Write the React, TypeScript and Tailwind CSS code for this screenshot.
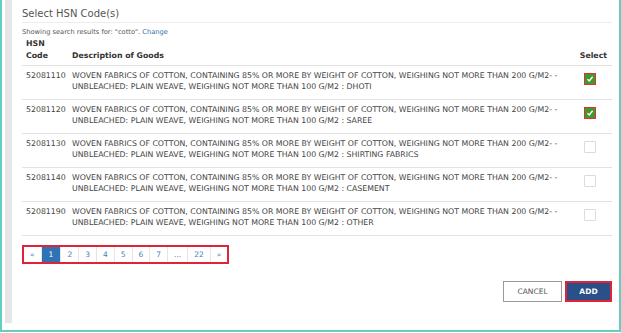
import React from "react";

const rows = [
  { code: "52081110", tail: "DHOTI", checked: true },
  { code: "52081120", tail: "SAREE", checked: true },
  { code: "52081130", tail: "SHIRTING FABRICS", checked: false },
  { code: "52081140", tail: "CASEMENT", checked: false },
  { code: "52081190", tail: "OTHER", checked: false },
];

const pages = ["«", "1", "2", "3", "4", "5", "6", "7", "...", "22", "»"];

const Check: React.FC<{ checked: boolean }> = ({ checked }) =>
  checked ? (
    <div className="w-[12px] h-[12px] border border-[#e0303a] bg-[#3f9a2c] flex items-center justify-center">
      <svg width="8" height="8" viewBox="0 0 8 8">
        <path d="M1.5 4.2 L3.3 6 L6.6 1.8" stroke="#fff" strokeWidth="1.4" fill="none" />
      </svg>
    </div>
  ) : (
    <div className="w-[12px] h-[12px] border border-[#dcdcdc] rounded-[1px] bg-white" />
  );

const App: React.FC = () => {
  return (
    <div
      className="w-[621px] h-[333px] bg-white overflow-hidden"
      style={{ fontFamily: '"DejaVu Sans", Verdana, sans-serif' }}
    >
      <div className="w-[621px] h-[332px] border-l-2 border-r-2 border-b-2 border-[#63cfc0] flex">
        <div className="ml-[3px] w-[7px] h-[323px] bg-[#e6e6ea]" />
        <div className="flex-1 pl-[10px] pr-[7px] pt-[5px]">
          <div className="text-[10px] text-[#555] h-[17px] leading-[17px]">Select HSN Code(s)</div>
          <div className="border-t border-[#eeeeee]" />
          <div className="text-[6.7px] text-[#555] mt-[3px] leading-[12px]">
            Showing search results for: "cotto". <span className="text-[#2f6fb0]">Change</span>
          </div>
          <table className="w-full text-[7.8px] text-[#444] border-collapse">
            <thead>
              <tr className="border-b border-[#e2e2e2]">
                <th className="text-left font-bold text-[#333] pl-[4px] pb-[3px] w-[50px] leading-[12px] align-bottom">
                  HSN
                  <br />
                  Code
                </th>
                <th className="text-left font-bold text-[#333] pb-[3px] align-bottom leading-[12px]">Description of Goods</th>
                <th className="text-right font-bold text-[#333] pb-[3px] pr-[5px] align-bottom leading-[12px]">Select</th>
              </tr>
            </thead>
            <tbody>
              {rows.map((r) => (
                <tr key={r.code} className="border-b border-[#e2e2e2] h-[34px]">
                  <td className="pl-[4px] align-top pt-[4px] leading-[11px]">{r.code}</td>
                  <td className="align-top pt-[4px] leading-[11px]">
                    WOVEN FABRICS OF COTTON, CONTAINING 85% OR MORE BY WEIGHT OF COTTON, WEIGHING NOT MORE THAN 200 G/M2- -
                    <br />
                    UNBLEACHED: PLAIN WEAVE, WEIGHING NOT MORE THAN 100 G/M2 : {r.tail}
                  </td>
                  <td className="align-top pt-[7px]">
                    <div className="flex justify-end pr-[16px]">
                      <Check checked={r.checked} />
                    </div>
                  </td>
                </tr>
              ))}
            </tbody>
          </table>
          <div className="mt-[9px] inline-flex border-2 border-[#e02437]">
            {pages.map((p, i) => (
              <div
                key={i}
                className={
                  "h-[15px] flex items-center justify-center text-[7.5px] border-r border-[#e6e6e6] last:border-r-0 " +
                  (p === "1"
                    ? "bg-[#2f72b6] text-white px-[7px]"
                    : "bg-white text-[#4a7fb8] px-[6px]")
                }
              >
                {p}
              </div>
            ))}
          </div>
          <div className="flex justify-end gap-[3px] mt-[17px]">
            <button className="h-[21px] w-[59px] border border-[#9a9a9a] bg-white text-[7.5px] text-[#555]">
              CANCEL
            </button>
            <button className="h-[21px] w-[47px] border-2 border-[#e02437] bg-[#2b4f88] text-[7.5px] font-bold text-white">
              ADD
            </button>
          </div>
        </div>
      </div>
    </div>
  );
};

export default App;
